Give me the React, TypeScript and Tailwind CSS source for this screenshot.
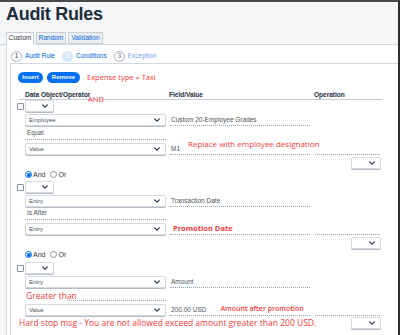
import React from 'react';

function Chevron() {
  return (
    <svg width="6" height="4" viewBox="0 0 10 6" className="shrink-0">
      <path d="M1 1l4 4 4-4" fill="none" stroke="#1d2d3e" strokeWidth="1.8" strokeLinecap="round" strokeLinejoin="round" />
    </svg>
  );
}

function Select({ label, width }: { label?: string; width: string }) {
  return (
    <div className={`${width} h-[12px] flex items-center justify-between pl-[3px] pr-[5px] bg-white border border-[#d5dae0] rounded-[2px] shadow-[0_1px_0_#b4bcc5]`}>
      <span className="text-[6px] leading-none text-[#4a535c]">{label}</span>
      <Chevron />
    </div>
  );
}

function Field({ children }: { children?: React.ReactNode }) {
  return (
    <div className="h-full flex items-end gap-[14px] border-b border-dotted border-[#98a2ac] pl-[1px] pb-[2px] text-[6.5px] leading-none text-[#4a535c]">
      {children}
    </div>
  );
}

function Check() {
  return <div className="w-[7px] h-[7px] border border-[#89919a] rounded-[1px] bg-white" />;
}

function Row({ check, data, field, op, className = '' }: { check?: React.ReactNode; data?: React.ReactNode; field?: React.ReactNode; op?: React.ReactNode; className?: string }) {
  return (
    <div className={`flex h-[12px] ${className}`}>
      <div className="w-[8px] flex items-center">{check}</div>
      <div className="w-[141px] relative">{data}</div>
      <div className="w-[140px] ml-[4px] relative">{field}</div>
      <div className="w-[66px] ml-[5px] relative flex justify-end">{op}</div>
    </div>
  );
}

function Radios() {
  return (
    <div className="flex items-center h-[11px] pl-[8px] text-[7px] leading-none text-[#32363a]">
      <div className="w-[7px] h-[7px] rounded-full border border-[#0070f2] flex items-center justify-center">
        <div className="w-[4px] h-[4px] rounded-full bg-[#0070f2]" />
      </div>
      <span className="ml-[1px]">And</span>
      <div className="ml-[5px] w-[7px] h-[7px] rounded-full border border-[#89919a]" />
      <span className="ml-[1px]">Or</span>
    </div>
  );
}

function OpSelect() {
  return <Select width="w-[30px]" />;
}

function OpLine() {
  return <div className="w-[65px] mr-[1px] h-full border-b border-dotted border-[#98a2ac]" />;
}

const red = "font-['Open_Sans',sans-serif] text-[#f23b3b] leading-none whitespace-nowrap";

export default function App() {
  return (
    <div className="w-[400px] h-[335px] overflow-hidden border-t-2 border-t-[#4a4a4a] border-r-2 border-r-[#2e2e2e] bg-[#f5f6f7] flex flex-col font-['Liberation_Sans',Arial,sans-serif]">
      <div className="pl-[6px] pt-[3px] border-b border-[#d3d8de]">
        <div className="text-[18px] leading-[18px] font-bold text-[#1d2d3e] tracking-[-0.3px]">Audit Rules</div>
        <div className="flex mt-[9px] h-[12px] gap-[2px] text-[6.5px] leading-none">
          <div className="w-[28px] h-[13px] bg-white border border-[#c9d0d8] border-b-white flex items-center justify-center text-[#32363a]">Custom</div>
          <div className="w-[30px] h-[12px] bg-[#eaeef3] border border-[#c9d0d8] flex items-center justify-center text-[#0064d9]">Random</div>
          <div className="w-[35px] h-[12px] bg-[#eaeef3] border border-[#c9d0d8] flex items-center justify-center text-[#0064d9]">Validation</div>
        </div>
      </div>

      <div className="flex-1 min-h-0 ml-[6px] bg-white border-l border-[#d3d8de] flex flex-col">
        <div className="h-[18px] pt-[4px] pl-[4px] flex items-center text-[6.5px] leading-none">
          <div className="w-[11px] h-[11px] rounded-full border border-[#a9b1ba] flex items-center justify-center text-[#32363a]">1</div>
          <span className="ml-[3px] text-[#0064d9]">Audit Rule</span>
          <div className="ml-[7px] w-[11px] h-[11px] rounded-full bg-[#d6e8fc] flex items-center justify-center text-white">2</div>
          <span className="ml-[3px] text-[#0064d9]">Conditions</span>
          <div className="ml-[7px] w-[11px] h-[11px] rounded-full border border-[#a9b1ba] flex items-center justify-center text-[#6a737c]">3</div>
          <span className="ml-[3px] text-[#6ea6e8]">Exception</span>
        </div>

        <div className="flex-1 min-h-0 ml-[3px] border-l border-t border-[#d3d8de] pl-[6px] pt-[8px] relative">
          <div className="flex items-center h-[11px]">
            <div className="ml-[1px] w-[25px] h-[11px] rounded-full bg-[#0070f2] text-white text-[6px] font-bold flex items-center justify-center">Insert</div>
            <div className="ml-[4px] w-[33px] h-[11px] rounded-full bg-[#0070f2] text-white text-[6px] font-bold flex items-center justify-center">Remove</div>
            <span className={`${red} ml-[7px] text-[7.5px]`}>Expense type = Taxi</span>
          </div>

          <div className="ml-[3px] w-[362px] h-[17px] flex items-end pb-[1px] border-b border-[#c4ccd4] text-[6.5px] leading-none font-bold text-[#1d2d3e]">
            <div className="w-[149px] pl-[5px]">Data Object/Operator</div>
            <div className="w-[145px]">Field/Value</div>
            <div>Operation</div>
          </div>
          <span className={`${red} absolute left-[77px] top-[32px] text-[7.5px]`}>AND</span>

          {/* condition 1 */}
          <Row check={<Check />} data={<Select width="w-[29px]" />} />
          <Row className="mt-[2px]" data={<Select width="w-[141px]" label="Employee" />} field={<Field>Custom 20-Employee Grades</Field>} />
          <Row className="mt-[2px]" data={<div className="h-full flex items-center pl-[2px] border-b border-dotted border-[#98a2ac] text-[6.5px] leading-none text-[#4a535c]">Equal</div>} />
          <Row className="mt-[3px]" data={<Select width="w-[141px]" label="Value" />} field={<Field>M1</Field>} op={<OpLine />} />
          <Row className="mt-[2px]" op={<OpSelect />} />
          <span className={`${red} absolute left-[177px] top-[76px] text-[8px]`}>Replace with employee designation</span>

          {/* condition 2 */}
          <Radios />
          <Row className="mt-[1px]" check={<Check />} data={<Select width="w-[29px]" />} />
          <Row className="mt-[2px]" data={<Select width="w-[141px]" label="Entry" />} field={<Field>Transaction Date</Field>} />
          <Row className="mt-[1px]" data={<div className="h-full flex items-center pl-[2px] border-b border-dotted border-[#98a2ac] text-[6.5px] leading-none text-[#4a535c]">Is After</div>} />
          <Row className="mt-[3px]" data={<Select width="w-[141px]" label="Entry" />} field={<Field><span className={`${red} font-bold text-[7.5px] ml-[2px]`}>Promotion Date</span></Field>} op={<OpLine />} />
          <Row className="mt-[2px]" op={<OpSelect />} />

          {/* condition 3 */}
          <Radios />
          <Row className="mt-[2px]" check={<Check />} data={<Select width="w-[29px]" />} />
          <Row className="mt-[2px]" data={<Select width="w-[141px]" label="Entry" />} field={<Field>Amount</Field>} />
          <Row
            className="mt-[1px]"
            data={
              <div className="h-full flex items-end">
                <div className="ml-[42px] flex-1 border-b border-dotted border-[#98a2ac]" />
                <span className={`${red} absolute left-[1px] top-[3px] text-[8.5px]`}>Greater than</span>
              </div>
            }
          />
          <Row
            className="mt-[3px]"
            data={<Select width="w-[141px]" label="Value" />}
            field={<Field>200.00 USD<span className={`${red} font-semibold text-[7px] mb-[1px]`}>Amount after promotion</span></Field>}
            op={<OpLine />}
          />
          <Row className="mt-[1px]" op={<OpSelect />} />
          <span className={`${red} absolute left-[8px] top-[255px] text-[8.5px] bg-white`}>Hard stop msg - You are not allowed exceed amount greater than 200 USD.</span>
        </div>
      </div>
    </div>
  );
}
